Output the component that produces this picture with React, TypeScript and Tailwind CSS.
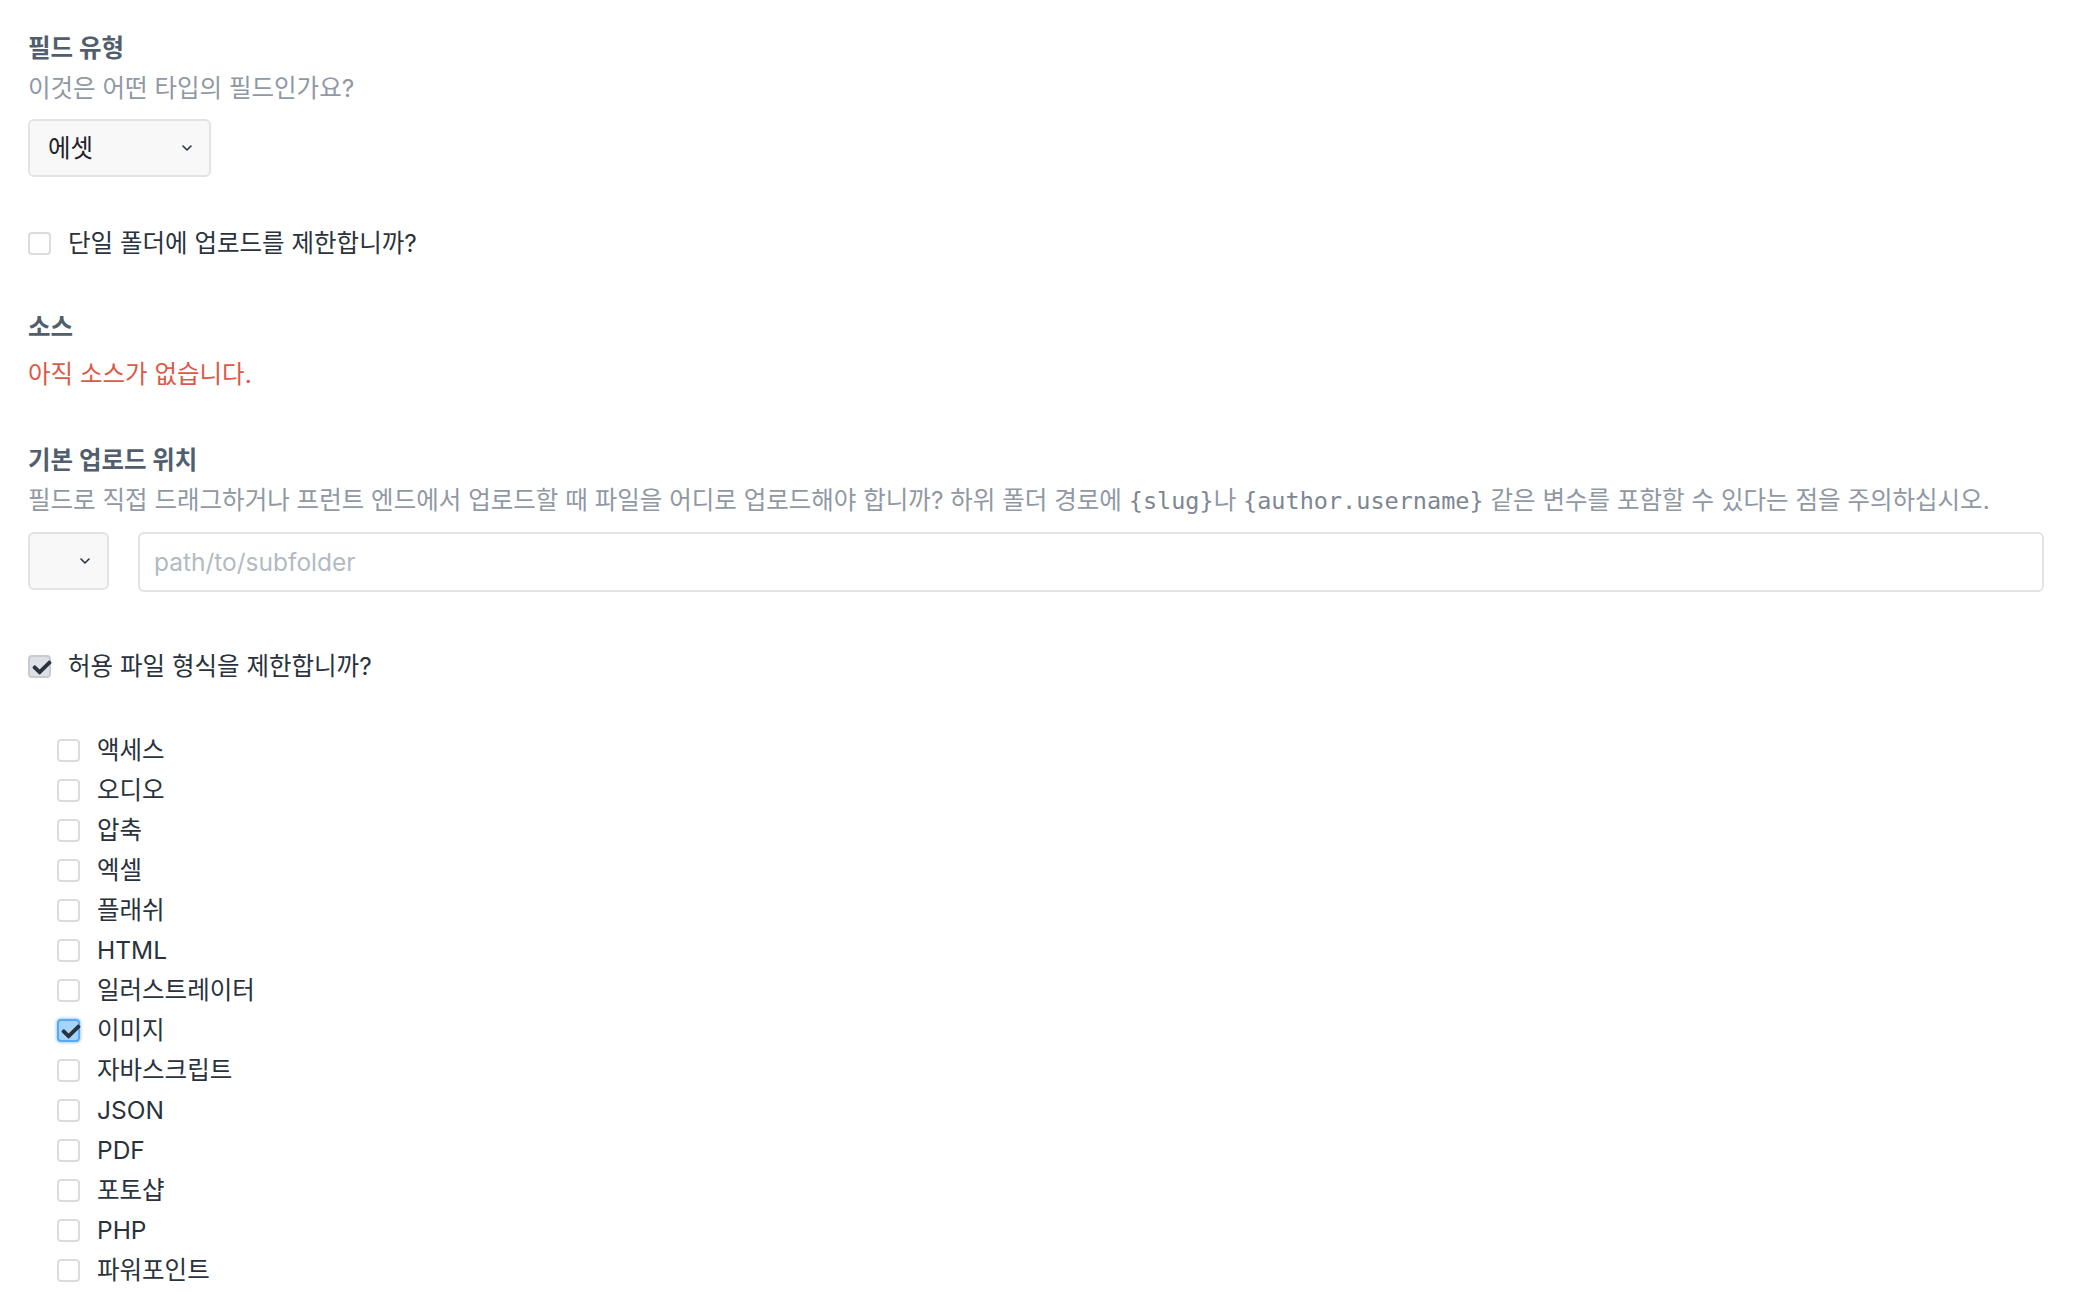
import React from "react";

const font = { fontFamily: 'Inter, "Noto Sans CJK KR", sans-serif' };

function Check({ className }: { className?: string }) {
  return (
    <svg viewBox="0 0 512 512" className={className} fill="#29323d">
      <path d="M173.898 439.404l-166.4-166.4c-9.997-9.997-9.997-26.206 0-36.204l36.203-36.204c9.997-9.998 26.207-9.998 36.204 0L192 312.69 432.095 72.596c9.997-9.997 26.207-9.997 36.204 0l36.203 36.204c9.997 9.997 9.997 26.206 0 36.204l-294.4 294.401c-9.998 9.997-26.207 9.997-36.204-.001z" />
    </svg>
  );
}

type BoxKind = "off" | "gray" | "blue";

function Box({ kind }: { kind: BoxKind }) {
  if (kind === "off") {
    return <span className="block w-[23px] h-[23px] shrink-0 rounded-[4px] border-2 border-[#dcdcdc] bg-white" />;
  }
  const cls =
    kind === "gray"
      ? "bg-[#dde0e5] border-[#c7cbd1]"
      : "bg-[#a6d4fc] border-[#5aaaf3] shadow-[0_0_3px_1px_rgba(90,170,243,0.55)]";
  return (
    <span className={`relative block w-[23px] h-[23px] shrink-0 rounded-[4px] border-2 ${cls}`}>
      <Check className="absolute left-[1px] top-[1px] w-[22px] h-[19px]" />
    </span>
  );
}

function CheckRow({ kind, label }: { kind: BoxKind; label: string }) {
  return (
    <div className="flex items-center h-[40px] gap-[17px]">
      <Box kind={kind} />
      <span className="text-[#29323d]">{label}</span>
    </div>
  );
}

function Chevron({ className }: { className?: string }) {
  return (
    <svg viewBox="0 0 12 8" className={className} fill="none" stroke="#29323d" strokeWidth="1.6" strokeLinecap="round" strokeLinejoin="round">
      <path d="M2 2l4 4 4-4" />
    </svg>
  );
}

const types: [BoxKind, string][] = [
  ["off", "액세스"],
  ["off", "오디오"],
  ["off", "압축"],
  ["off", "엑셀"],
  ["off", "플래쉬"],
  ["off", "HTML"],
  ["off", "일러스트레이터"],
  ["blue", "이미지"],
  ["off", "자바스크립트"],
  ["off", "JSON"],
  ["off", "PDF"],
  ["off", "포토샵"],
  ["off", "PHP"],
  ["off", "파워포인트"],
];

const mono = { fontFamily: '"DejaVu Sans Mono", "Liberation Mono", monospace' };

export default function App() {
  return (
    <div style={font} className="min-h-[1294px] w-[2080px] bg-white pl-[28px] pt-[28px] text-[24.5px] leading-[40px] text-[#29323d]">
      <div className="font-bold text-[#515e6d]">필드 유형</div>
      <div className="text-[#8f98a3]">이것은 어떤 타입의 필드인가요?</div>
      <div className="mt-[11px] flex items-center justify-between w-[183px] h-[58px] rounded-[6px] border-2 border-[#e2e3e5] bg-[#f8f8f9] pl-[18px] pr-[16px]">
        <span className="text-[#1f2328]">에셋</span>
        <Chevron className="w-[12px] h-[8px]" />
      </div>

      <div className="mt-[46px]">
        <CheckRow kind="off" label="단일 폴더에 업로드를 제한합니까?" />
      </div>

      <div className="mt-[44px] font-bold text-[#515e6d]">소스</div>
      <div className="mt-[7px] text-[#da5a47]">아직 소스가 없습니다.</div>

      <div className="mt-[46px] font-bold text-[#515e6d]">기본 업로드 위치</div>
      <div className="text-[#8f98a3] whitespace-nowrap">
        필드로 직접 드래그하거나 프런트 엔드에서 업로드할 때 파일을 어디로 업로드해야 합니까? 하위 폴더 경로에{" "}
        <code style={mono} className="text-[23.5px] text-[#7d8691]">{"{slug}"}</code>나{" "}
        <code style={mono} className="text-[23.5px] text-[#7d8691]">{"{author.username}"}</code> 같은 변수를 포함할 수 있다는 점을 주의하십시오.
      </div>
      <div className="mt-[11px] flex items-start gap-[29px]">
        <div className="flex items-center justify-end w-[81px] h-[58px] rounded-[6px] border-2 border-[#e2e3e5] bg-[#f8f8f9] pr-[16px]">
          <Chevron className="w-[12px] h-[8px]" />
        </div>
        <div className="flex items-center w-[1906px] h-[60px] rounded-[6px] border-2 border-[#e1e3e7] bg-white pl-[14px]">
          <span className="text-[#b3bac2] text-[24.5px]">path/to/subfolder</span>
        </div>
      </div>

      <div className="mt-[54px]">
        <CheckRow kind="gray" label="허용 파일 형식을 제한합니까?" />
      </div>

      <div className="mt-[44px] pl-[29px]">
        {types.map(([k, l]) => (
          <CheckRow key={l} kind={k} label={l} />
        ))}
      </div>
    </div>
  );
}
